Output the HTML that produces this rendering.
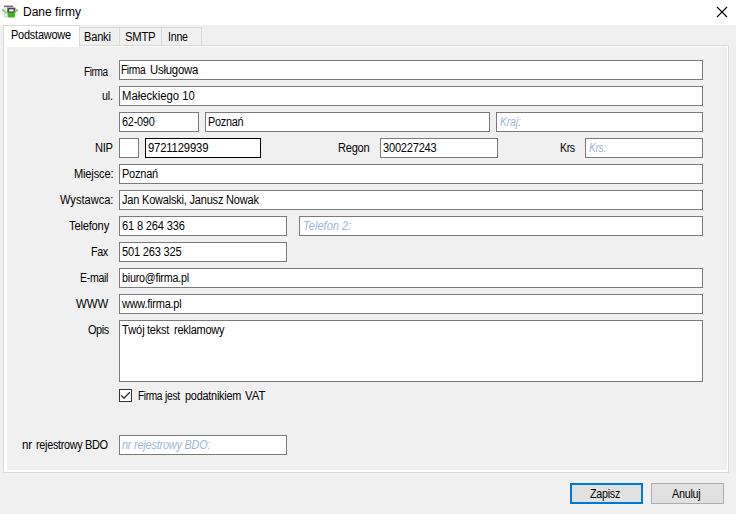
<!DOCTYPE html>
<html><head><meta charset="utf-8"><style>
html,body{margin:0;padding:0}
body{width:736px;height:514px;position:relative;overflow:hidden;background:#f0f0f0;font-family:"Liberation Sans",sans-serif;font-size:12px;color:#000}
.t{position:absolute;white-space:nowrap;line-height:14px;transform-origin:0 0}
.tb{position:absolute;background:#fff;border:1px solid #7a7a7a}
#title{position:absolute;left:0;top:0;width:736px;height:25px;background:#fff}
.tab{position:absolute;top:27px;height:18px;border:1px solid #d9d9d9;border-bottom:none;background:#f0f0f0}
#page{position:absolute;left:3px;top:45px;width:724px;height:426px;border:1px solid #d9d9d9;border-width:1px;background:#fff}
#content{position:absolute;left:7px;top:47px;width:720px;height:423px;background:#f0f0f0}
#seltab{position:absolute;left:3px;top:25px;width:75px;height:21px;border:1px solid #d9d9d9;border-bottom:none;background:#fff}
.btn{position:absolute;top:483px;height:21px;width:73px;box-sizing:border-box;background:#e1e1e1}
</style></head><body>
<div id="title"></div>
<svg style="position:absolute;left:0;top:0" width="22" height="22" viewBox="0 0 22 22">
 <path d="M3.5 12.5L6.5 17" stroke="#d4f0c8" stroke-width="1.6" fill="none"/>
 <rect x="5" y="6.4" width="2.4" height="10.6" fill="#f8f8f8" stroke="#b8b8b8" stroke-width="0.8"/>
 <rect x="4" y="5.6" width="9.2" height="1.4" fill="#6a6a6a"/>
 <rect x="8.3" y="8.5" width="6.2" height="3.8" fill="#fff" stroke="#484848" stroke-width="1.8"/>
 <path d="M2.4 10L7.8 13.4M17.6 10L14 13" stroke="#74d455" stroke-width="1.3" fill="none"/><circle cx="3" cy="10.2" r="1" fill="#6cd04c"/><circle cx="17" cy="10.2" r="1" fill="#6cd04c"/>
 <rect x="8" y="12.4" width="6.9" height="5.1" rx="0.8" fill="#3cb516"/>
</svg>
<svg style="position:absolute;left:716px;top:6px" width="12" height="12" viewBox="0 0 12 12">
 <path d="M1 1L11 11M11 1L1 11" stroke="#000" stroke-width="1.1" fill="none"/>
</svg>
<div class="tab" style="left:79px;width:39px"></div>
<div class="tab" style="left:119px;width:41px"></div>
<div class="tab" style="left:161px;width:39px"></div>
<div id="page"></div>
<div id="seltab"></div>
<div id="content"></div>
<div class="tb" style="left:119px;top:60px;width:582px;height:18px"></div><div class="tb" style="left:119px;top:86px;width:582px;height:18px"></div><div class="tb" style="left:119px;top:112px;width:78px;height:18px"></div><div class="tb" style="left:205px;top:112px;width:283px;height:18px"></div><div class="tb" style="left:496px;top:112px;width:205px;height:18px"></div><div class="tb" style="left:119px;top:138px;width:18px;height:18px"></div><div class="tb" style="left:380px;top:138px;width:116px;height:18px"></div><div class="tb" style="left:585px;top:138px;width:116px;height:18px"></div><div class="tb" style="left:119px;top:164px;width:582px;height:18px"></div><div class="tb" style="left:119px;top:190px;width:582px;height:18px"></div><div class="tb" style="left:119px;top:216px;width:166px;height:18px"></div><div class="tb" style="left:299px;top:216px;width:402px;height:18px"></div><div class="tb" style="left:119px;top:242px;width:166px;height:18px"></div><div class="tb" style="left:119px;top:268px;width:582px;height:18px"></div><div class="tb" style="left:119px;top:294px;width:582px;height:18px"></div><div class="tb" style="left:119px;top:320px;width:582px;height:60px"></div><div class="tb" style="left:119px;top:435px;width:166px;height:18px"></div>
<div class="tb" style="left:145px;top:138px;width:114px;height:18px;border-color:#000"></div>
<svg style="position:absolute;left:119px;top:389px" width="13" height="13" viewBox="0 0 13 13">
 <rect x="0.5" y="0.5" width="12" height="12" fill="#fff" stroke="#333"/>
 <path d="M2.1 6.3L4.9 9.2L10.8 3.3" stroke="#333" stroke-width="1.35" fill="none"/>
</svg>
<div class="btn" style="left:570px;border:2px solid #0078d7"></div>
<div class="btn" style="left:651px;border:1px solid #adadad"></div>
<div class="t" style="left:22.8px;top:5px;transform:scaleX(1.0018)">Dane firmy</div><div class="t" style="left:10.59px;top:28px;transform:scaleX(0.9138);letter-spacing:-0.25px">Podstawowe</div><div class="t" style="left:83.67px;top:30px;transform:scaleX(0.9250);letter-spacing:-0.23px">Banki</div><div class="t" style="left:125.16px;top:30px;transform:scaleX(0.9419);letter-spacing:-0.28px">SMTP</div><div class="t" style="left:167.51px;top:30px;transform:scaleX(0.8864);letter-spacing:-0.25px">Inne</div><div class="t" style="left:83.76px;top:65px;transform:scaleX(0.8357);letter-spacing:-0.49px">Firma</div><div class="t" style="left:101.5px;top:89px;transform:scaleX(0.9000);letter-spacing:-0.18px">ul.</div><div class="t" style="left:94.57px;top:141px;transform:scaleX(0.9278);letter-spacing:-0.34px">NIP</div><div class="t" style="left:337.68px;top:141px;transform:scaleX(0.9212);letter-spacing:-0.27px">Regon</div><div class="t" style="left:559.52px;top:141px;transform:scaleX(0.8813);letter-spacing:-0.43px">Krs</div><div class="t" style="left:73.68px;top:167px;transform:scaleX(0.9244);letter-spacing:-0.18px">Miejsce:</div><div class="t" style="left:59.9px;top:193px;transform:scaleX(0.9228)">Wystawca:</div><div class="t" style="left:68.5px;top:219px;transform:scaleX(0.9302);letter-spacing:-0.21px">Telefony</div><div class="t" style="left:91.4px;top:245px;transform:scaleX(0.9000);letter-spacing:-0.42px">Fax</div><div class="t" style="left:80.32px;top:271px;transform:scaleX(0.8806);letter-spacing:-0.34px">E-mail</div><div class="t" style="left:76.2px;top:297px;transform:scaleX(0.9500)">WWW</div><div class="t" style="left:87.7px;top:323px;transform:scaleX(0.9043);letter-spacing:-0.42px">Opis</div><div class="t" style="left:22.42px;top:438px;transform:scaleX(0.9778);letter-spacing:-0.36px">nr</div><div class="t" style="left:35.8px;top:438px;transform:scaleX(0.8942);letter-spacing:-0.28px">rejestrowy</div><div class="t" style="left:85.48px;top:438px;transform:scaleX(0.9208);letter-spacing:-0.44px">BDO</div><div class="t" style="left:121.35px;top:63px;transform:scaleX(0.8536);letter-spacing:-0.46px">Firma</div><div class="t" style="left:150.06px;top:63px;transform:scaleX(0.9440);letter-spacing:-0.21px">Usługowa</div><div class="t" style="left:121.56px;top:89px;transform:scaleX(0.9408)">Małeckiego 10</div><div class="t" style="left:122.3px;top:115px;transform:scaleX(0.9083);letter-spacing:-0.26px">62-090</div><div class="t" style="left:207.69px;top:115px;transform:scaleX(0.9053);letter-spacing:-0.28px">Poznań</div><div class="t" style="left:499.9px;top:115px;transform:scaleX(0.8750);letter-spacing:-0.22px;font-style:italic;color:#9db6da">Kraj:</div><div class="t" style="left:148px;top:141px;transform:scaleX(0.9422);letter-spacing:-0.19px">9721129939</div><div class="t" style="left:383.3px;top:141px;transform:scaleX(0.9241);letter-spacing:-0.24px">300227243</div><div class="t" style="left:589.1px;top:141px;transform:scaleX(0.8550);letter-spacing:-0.39px;font-style:italic;color:#9db6da">Krs:</div><div class="t" style="left:121.58px;top:167px;transform:scaleX(0.9158);letter-spacing:-0.25px">Poznań</div><div class="t" style="left:122.1px;top:193px;transform:scaleX(0.9174);letter-spacing:-0.22px">Jan Kowalski, Janusz Nowak</div><div class="t" style="left:122px;top:219px;transform:scaleX(0.9250);letter-spacing:-0.19px">61 8 264 336</div><div class="t" style="left:303.27px;top:219px;transform:scaleX(0.9255);font-style:italic;color:#9db6da">Telefon 2:</div><div class="t" style="left:122px;top:245px;transform:scaleX(0.9231);letter-spacing:-0.21px">501 263 325</div><div class="t" style="left:122px;top:271px;transform:scaleX(0.8973);letter-spacing:-0.27px">biuro@firma.pl</div><div class="t" style="left:122px;top:297px;transform:scaleX(0.9123);letter-spacing:-0.24px">www.firma.pl</div><div class="t" style="left:122.2px;top:323px;transform:scaleX(0.9208)">Twój</div><div class="t" style="left:146.9px;top:323px;transform:scaleX(0.9120);letter-spacing:-0.24px">tekst</div><div class="t" style="left:173.7px;top:323px;transform:scaleX(0.9109);letter-spacing:-0.26px">reklamowy</div><div class="t" style="left:137.55px;top:389px;transform:scaleX(0.8464);letter-spacing:-0.47px">Firma</div><div class="t" style="left:165.36px;top:389px;transform:scaleX(0.8579);letter-spacing:-0.37px">jest</div><div class="t" style="left:185px;top:389px;transform:scaleX(0.9048);letter-spacing:-0.24px">podatnikiem</div><div class="t" style="left:244.9px;top:389px;transform:scaleX(0.9545)">VAT</div><div class="t" style="left:122.1px;top:438px;transform:scaleX(0.9082);letter-spacing:-0.23px;font-style:italic;color:#9db6da">nr rejestrowy BDO:</div><div class="t" style="left:590px;top:487px;transform:scaleX(0.8912);letter-spacing:-0.28px">Zapisz</div><div class="t" style="left:671.9px;top:487px;transform:scaleX(0.8969);letter-spacing:-0.26px">Anuluj</div>
</body></html>
